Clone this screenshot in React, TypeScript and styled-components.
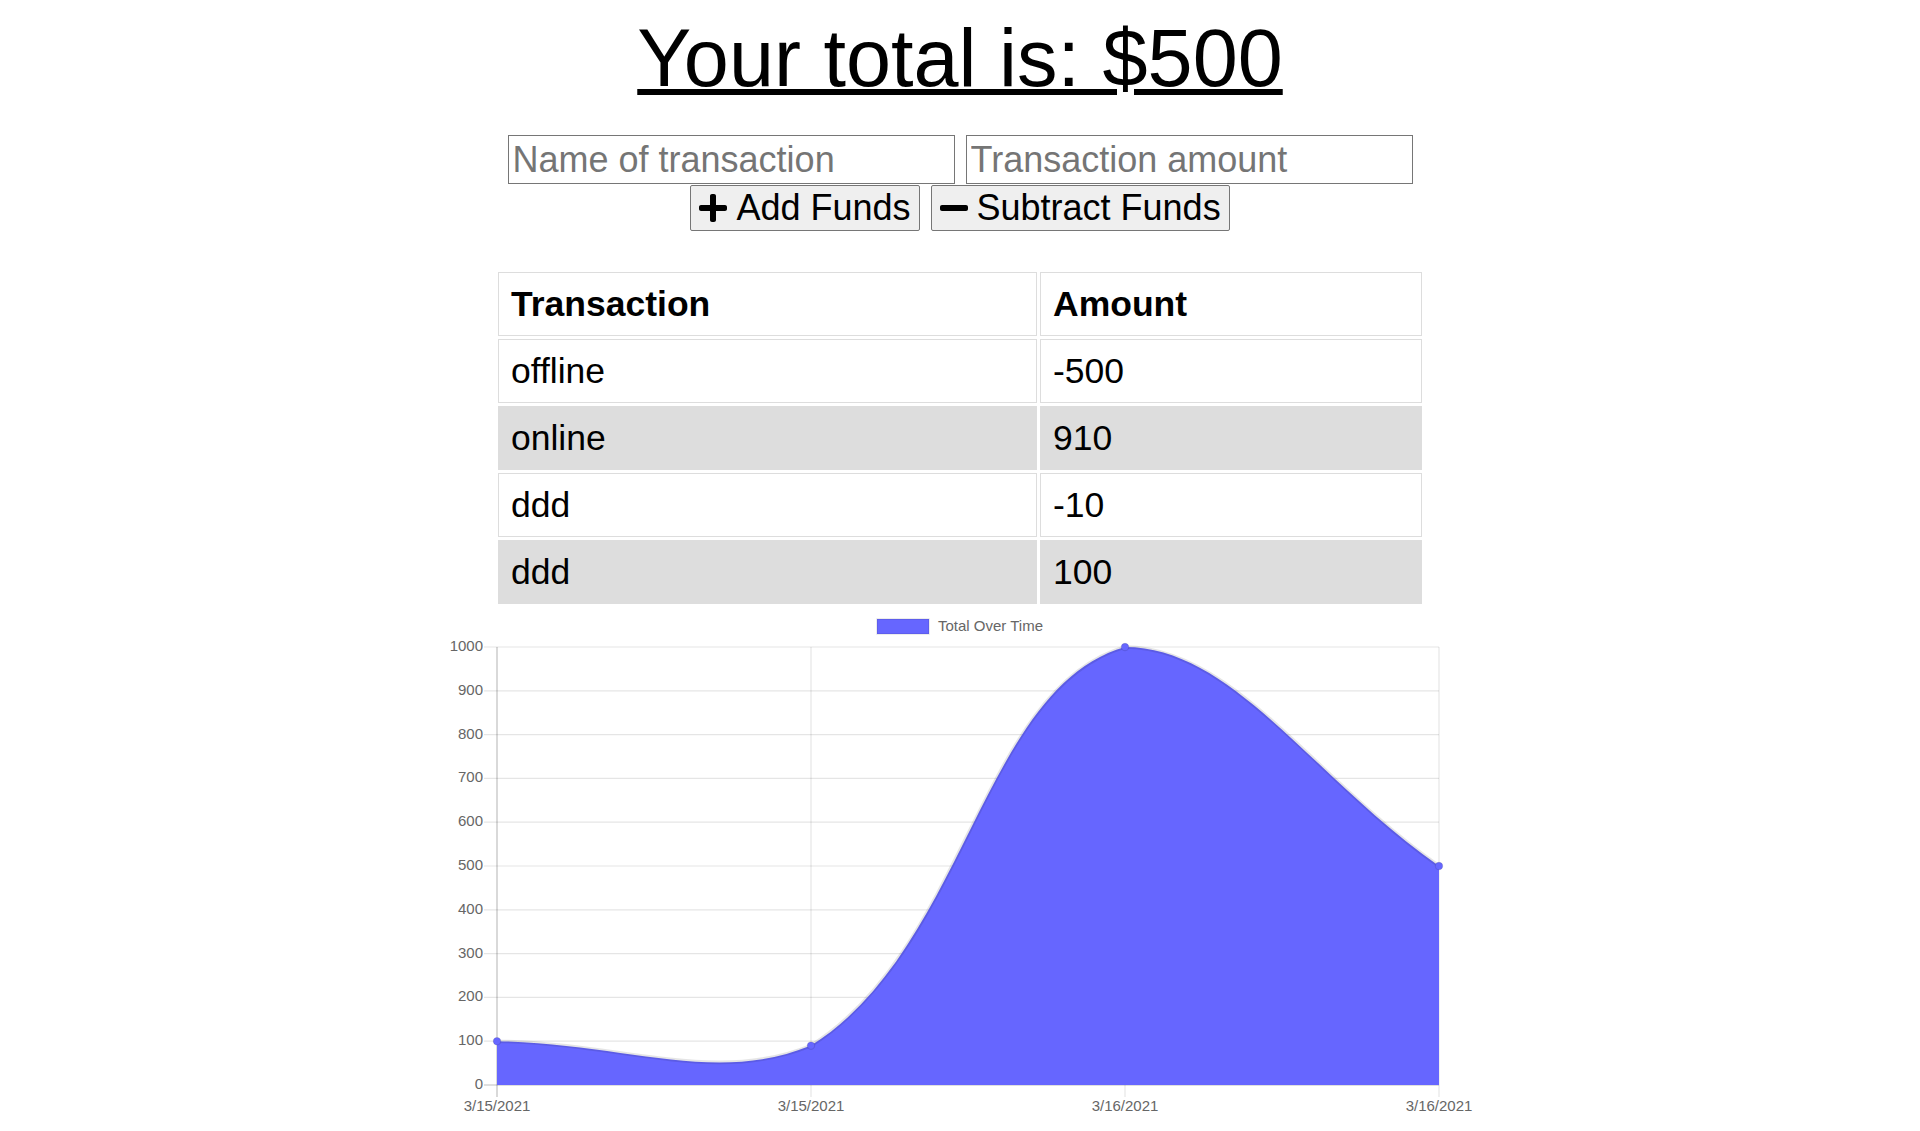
import React from 'react';
import styled, { createGlobalStyle } from 'styled-components';
import { FaPlus, FaMinus } from 'react-icons/fa';

const GlobalStyle = createGlobalStyle`
    html, body {
        margin: 0;
        padding: 0;
        background: #ffffff;
    }
    body {
        font-family: 'Liberation Sans', Arial, Helvetica, sans-serif;
        color: #000000;
    }
`;

const Page = styled.div`
    display: flex;
    flex-direction: column;
    align-items: center;
    padding-top: 12px;
`;

const Title = styled.h1`
    margin: 0;
    font-size: 81px;
    font-weight: normal;
    line-height: 92px;
    text-decoration: underline;
    text-decoration-thickness: 6px;
`;

const InputRow = styled.div`
    display: flex;
    gap: 11px;
    margin-top: 31px;
`;

const Input = styled.input`
    box-sizing: border-box;
    width: 447px;
    height: 49px;
    padding: 1px 4px;
    border: 1px solid #767676;
    border-radius: 0;
    font-family: inherit;
    font-size: 36px;
    color: #000000;
    outline: none;

    &::placeholder {
        color: #757575;
    }
`;

const ButtonRow = styled.div`
    display: flex;
    gap: 11px;
    margin-top: 1px;
`;

const Button = styled.button`
    display: inline-flex;
    align-items: center;
    gap: 9px;
    box-sizing: border-box;
    height: 46px;
    padding: 0 8px;
    border: 1px solid #767676;
    border-radius: 2px;
    background: #efefef;
    font-family: inherit;
    font-size: 36px;
    color: #000000;
    cursor: pointer;

    svg {
        width: 28px;
        height: 32px;
        flex: none;
    }
`;

const Table = styled.table`
    margin-top: 38px;
    width: 930px;
    border-collapse: separate;
    border-spacing: 3px;
    font-size: 35.5px;
`;

const Th = styled.th<{ $main?: boolean }>`
    width: ${(p) => (p.$main ? '513px' : 'auto')};
    text-align: left;
    font-weight: bold;
    line-height: 40px;
    padding: 11px 12px;
    border: 1px solid #dddddd;
`;

const Td = styled.td<{ $striped?: boolean }>`
    line-height: 40px;
    padding: 11px 12px;
    border: 1px solid #dddddd;
    background: ${(p) => (p.$striped ? '#dddddd' : '#ffffff')};
`;

const ChartWrap = styled.div`
    width: 1040px;
    height: 521px;

    svg {
        display: block;
        font-family: 'Liberation Sans', Arial, Helvetica, sans-serif;
    }
`;

const transactions = [
    { name: 'offline', value: -500 },
    { name: 'online', value: 910 },
    { name: 'ddd', value: -10 },
    { name: 'ddd', value: 100 },
];

const totals = [100, 90, 1000, 500];
const labels = ['3/15/2021', '3/15/2021', '3/16/2021', '3/16/2021'];

// plot area inside the chart svg
const L = 57;
const R = 999;
const T = 40;
const B = 478;
const FILL = '#6666ff';

type Pt = { x: number; y: number };

const clamp = (v: number, lo: number, hi: number) => Math.max(lo, Math.min(hi, v));

const controlPoints = (pts: Pt[], tension = 0.4) =>
    pts.map((p, i) => {
        const prev = pts[i - 1] || p;
        const next = pts[i + 1] || p;
        const d01 = Math.hypot(p.x - prev.x, p.y - prev.y);
        const d12 = Math.hypot(next.x - p.x, next.y - p.y);
        const s01 = d01 + d12 ? d01 / (d01 + d12) : 0;
        const s12 = d01 + d12 ? d12 / (d01 + d12) : 0;
        const fa = tension * s01;
        const fb = tension * s12;
        return {
            prev: {
                x: clamp(p.x - fa * (next.x - prev.x), L, R),
                y: clamp(p.y - fa * (next.y - prev.y), T, B),
            },
            next: {
                x: clamp(p.x + fb * (next.x - prev.x), L, R),
                y: clamp(p.y + fb * (next.y - prev.y), T, B),
            },
        };
    });

const Chart = () => {
    const yOf = (v: number) => B - (v / 1000) * (B - T);
    const xOf = (i: number) => L + (i * (R - L)) / (totals.length - 1);
    const pts = totals.map((v, i) => ({ x: xOf(i), y: yOf(v) }));
    const cps = controlPoints(pts);

    let line = `M ${pts[0].x} ${pts[0].y}`;
    for (let i = 1; i < pts.length; i++) {
        const a = cps[i - 1].next;
        const b = cps[i].prev;
        line += ` C ${a.x} ${a.y} ${b.x} ${b.y} ${pts[i].x} ${pts[i].y}`;
    }
    const area = `${line} L ${R} ${B} L ${L} ${B} Z`;
    const ticks = Array.from({ length: 11 }, (_, i) => i * 100);

    return (
        <svg width={1040} height={521} viewBox="0 0 1040 521">
            <rect x={437} y={12} width={52} height={15} fill={FILL} stroke="rgba(0,0,0,0.1)" strokeWidth={1.5} />
            <text x={498} y={20} fontSize={15} fill="#666" dominantBaseline="middle">
                Total Over Time
            </text>

            {ticks.map((v) => (
                <g key={v}>
                    <line
                        x1={L - 13}
                        x2={R}
                        y1={yOf(v)}
                        y2={yOf(v)}
                        stroke={v === 0 ? 'rgba(0,0,0,0.25)' : 'rgba(0,0,0,0.1)'}
                        strokeWidth={1.2}
                    />
                    <text x={43} y={yOf(v)} fontSize={15} fill="#666" textAnchor="end" dominantBaseline="middle">
                        {v}
                    </text>
                </g>
            ))}

            {labels.map((lb, i) => (
                <g key={i}>
                    <line
                        x1={xOf(i)}
                        x2={xOf(i)}
                        y1={T}
                        y2={B + 12}
                        stroke={i === 0 ? 'rgba(0,0,0,0.25)' : 'rgba(0,0,0,0.1)'}
                        strokeWidth={1.2}
                    />
                    <text x={xOf(i)} y={500} fontSize={15} fill="#666" textAnchor="middle" dominantBaseline="middle">
                        {lb}
                    </text>
                </g>
            ))}

            <path d={area} fill={FILL} />
            <path d={line} fill="none" stroke="rgba(0,0,0,0.1)" strokeWidth={3.6} />
            {pts.map((p, i) => (
                <circle key={i} cx={p.x} cy={p.y} r={3.7} fill={FILL} stroke="rgba(0,0,0,0.1)" strokeWidth={1.2} />
            ))}
        </svg>
    );
};

export default function App() {
    return (
        <>
            <GlobalStyle />
            <Page>
                <Title>Your total is: $500</Title>
                <InputRow>
                    <Input type="text" placeholder="Name of transaction" />
                    <Input type="number" placeholder="Transaction amount" />
                </InputRow>
                <ButtonRow>
                    <Button>
                        <FaPlus />
                        Add Funds
                    </Button>
                    <Button>
                        <FaMinus />
                        Subtract Funds
                    </Button>
                </ButtonRow>
                <Table>
                    <thead>
                        <tr>
                            <Th $main>Transaction</Th>
                            <Th>Amount</Th>
                        </tr>
                    </thead>
                    <tbody>
                        {transactions.map((t, i) => (
                            <tr key={i}>
                                <Td $striped={i % 2 === 1}>{t.name}</Td>
                                <Td $striped={i % 2 === 1}>{t.value}</Td>
                            </tr>
                        ))}
                    </tbody>
                </Table>
                <ChartWrap>
                    <Chart />
                </ChartWrap>
            </Page>
        </>
    );
}
